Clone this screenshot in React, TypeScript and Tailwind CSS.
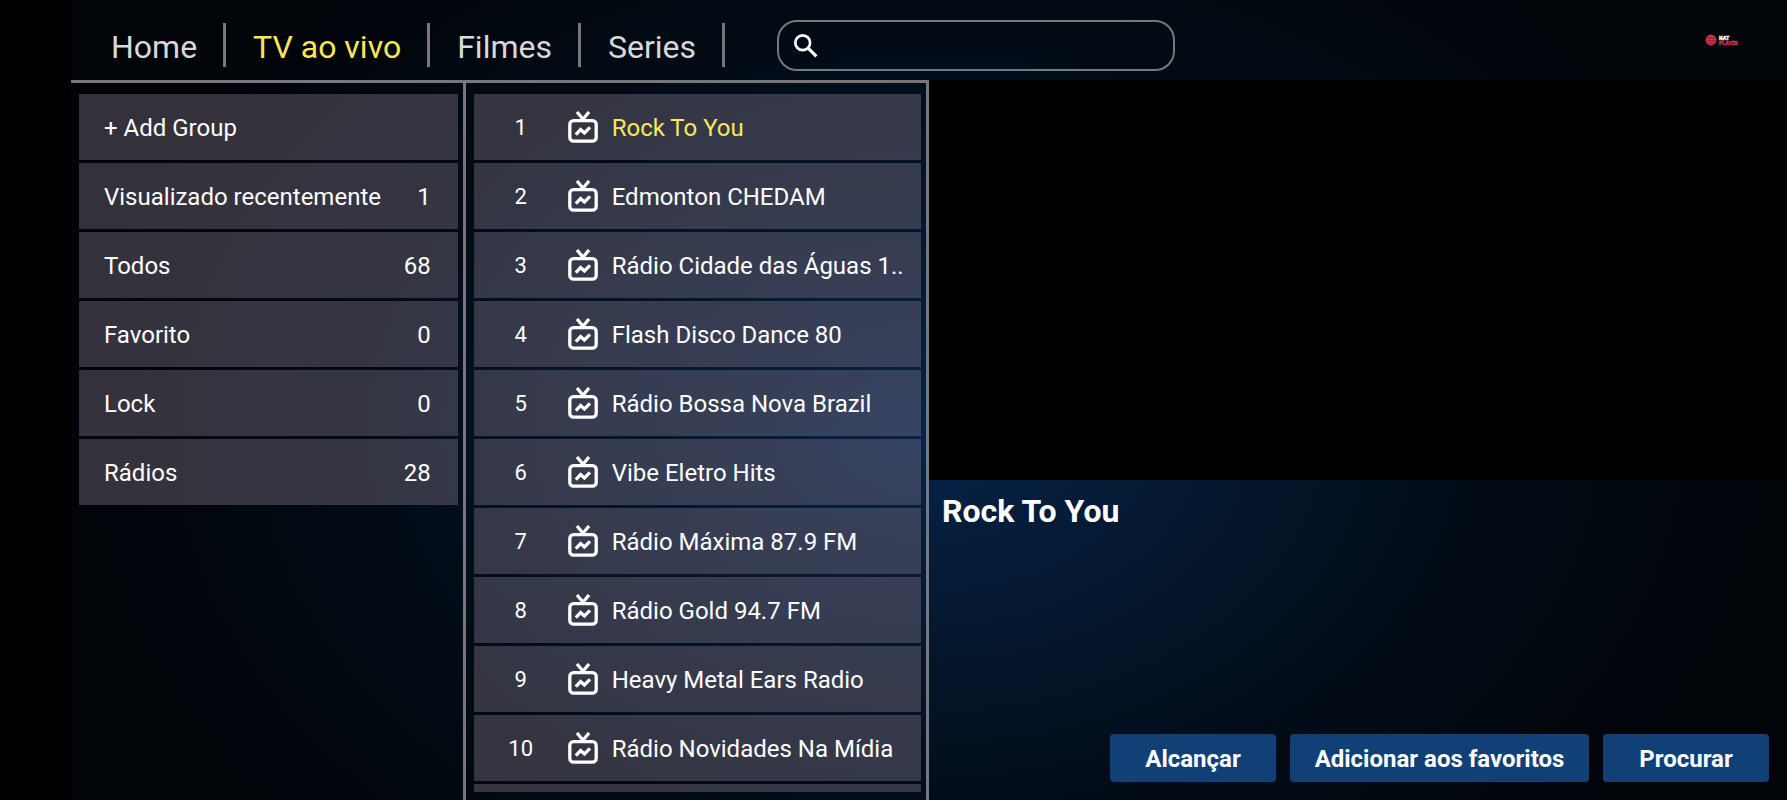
const tabs = [
  { label: "Home", active: false },
  { label: "TV ao vivo", active: true },
  { label: "Filmes", active: false },
  { label: "Series", active: false },
];

const groups = [
  { name: "+ Add Group", count: "" },
  { name: "Visualizado recentemente", count: "1" },
  { name: "Todos", count: "68" },
  { name: "Favorito", count: "0" },
  { name: "Lock", count: "0" },
  { name: "Rádios", count: "28" },
];

const channels = [
  "Rock To You",
  "Edmonton CHEDAM",
  "Rádio Cidade das Águas 1..",
  "Flash Disco Dance 80",
  "Rádio Bossa Nova Brazil",
  "Vibe Eletro Hits",
  "Rádio Máxima 87.9 FM",
  "Rádio Gold 94.7 FM",
  "Heavy Metal Ears Radio",
  "Rádio Novidades Na Mídia",
];

const actions = [
  { label: "Alcançar", wide: false },
  { label: "Adicionar aos favoritos", wide: true },
  { label: "Procurar", wide: false },
];

function SearchIcon() {
  return (
    <svg width="32" height="32" viewBox="0 0 32 32" fill="none" stroke="#fff" aria-hidden="true" className="shrink-0">
      <circle cx="12.7" cy="12.7" r="7.4" strokeWidth="2.7" />
      <path d="M18.6 18.6 L26.4 26.4" strokeWidth="3.2" />
    </svg>
  );
}

function TvIcon() {
  return (
    <svg width="30" height="32" viewBox="0 0 30 32" fill="none" stroke="#fff" aria-hidden="true" className="shrink-0">
      <rect x="1.8" y="9.6" width="26.4" height="20.6" rx="3.8" strokeWidth="3.3" />
      <path d="M9 1 L15 8.2 L21 1" strokeWidth="3.3" />
      <path d="M7.8 23.6 L12.6 18.6 L16.4 22 L22 16.4" strokeWidth="3.3" />
    </svg>
  );
}

function Logo() {
  return (
    <svg width="36" height="12" viewBox="0 0 36 12" role="img" aria-label="Nat Player">
      <circle cx="6" cy="6" r="5.4" fill="#d3304e" />
      <path d="M2 4.2 Q5.5 2.4 9.5 4.4 M2.5 7.4 Q6.5 5 10.5 7.4 M4 9.8 Q6.5 8.4 8.9 9.6" stroke="#6d1428" strokeWidth="0.7" fill="none" />
      <g fontSize="5.2" fontWeight="900" fontFamily="Roboto, sans-serif" strokeWidth="0.3">
        <text x="14" y="5.6" fill="#fff" stroke="#fff">NAT</text>
        <text x="14" y="10.6" fill="#d3304e" stroke="#d3304e">PLAYER</text>
      </g>
    </svg>
  );
}

const rowClass = "flex h-[66px] w-full items-center bg-[#827686]/40 text-left text-2xl text-white";

export default function App() {
  return (
    <div className="h-screen min-h-[800px] overflow-hidden bg-black pl-[71px] font-[Roboto,sans-serif]">
      <div className="flex h-full flex-col bg-[#010409] bg-[radial-gradient(ellipse_50%_76%_at_50%_54%,#05244b_0%,#051b36_22%,#041428_42%,#020b15_66%,transparent_100%)]">
        <header className="flex h-20 shrink-0 items-center pr-[46px]">
          <nav className="flex items-center pl-[13px]">
            {tabs.map((tab) => (
              <a
                key={tab.label}
                href="#"
                aria-current={tab.active ? "page" : undefined}
                className={`mt-[10px] flex h-[44px] items-center border-r-[3px] border-[#77777b] pt-[3px] pr-[26px] pl-[27px] text-[32px] leading-[44px] ${tab.active ? "text-[#f8e859]" : "text-[#d9d9db]"}`}
              >
                {tab.label}
              </a>
            ))}
          </nav>
          <label className="mt-[11px] ml-[52px] flex h-[51px] w-[398px] items-center rounded-[20px] border-2 border-[#77777b] px-[11px]">
            <SearchIcon />
            <input type="search" aria-label="Search" className="ml-3 w-full bg-transparent text-2xl text-white outline-none" />
          </label>
          <div className="ml-auto">
            <Logo />
          </div>
        </header>

        <main className="grid min-h-0 flex-1 grid-cols-[23fr_27fr_50fr]">
          <section aria-label="Groups" className="border-t-[3px] border-r-[3px] border-[#77777b] pt-[11px] pr-[5px] pl-2">
            <ul className="flex flex-col gap-[3px]">
              {groups.map((group) => (
                <li key={group.name}>
                  <button type="button" className={`${rowClass} justify-between pr-[27px] pl-[25px]`}>
                    <span className="pt-[2px]">{group.name}</span>
                    <span className="pt-[2px]">{group.count}</span>
                  </button>
                </li>
              ))}
            </ul>
          </section>

          <section aria-label="Channels" className="flex min-h-0 flex-col border-t-[3px] border-r-[3px] border-[#77777b] pt-[11px] pr-[5px] pb-2 pl-2">
            <ul className="flex flex-1 flex-col gap-[3px]">
              {channels.map((name, index) => (
                <li key={name}>
                  <button type="button" className={rowClass}>
                    <span className="w-[94px] shrink-0 pt-[2px] text-center text-[22px]">{index + 1}</span>
                    <TvIcon />
                    <span className={`ml-[14px] pt-[2px] whitespace-nowrap ${index === 0 ? "text-[#f8e859]" : ""}`}>{name}</span>
                  </button>
                </li>
              ))}
              <li className="flex-1 bg-[#827686]/40" />
            </ul>
          </section>

          <section aria-label="Player" className="flex min-h-0 flex-col">
            <div className="h-[400px] shrink-0 bg-black" />
            <h1 className="px-[13px] pt-[11px] text-[32px] leading-[40px] font-bold text-white">Rock To You</h1>
            <div className="mt-auto flex justify-end gap-[14px] pr-[18px] pb-[18px]">
              {actions.map((action) => (
                <button
                  key={action.label}
                  type="button"
                  className={`h-12 rounded bg-[#114077] pt-[2px] text-center text-2xl font-bold text-white ${action.wide ? "w-[299px]" : "w-[166px]"}`}
                >
                  {action.label}
                </button>
              ))}
            </div>
          </section>
        </main>
      </div>
    </div>
  );
}
